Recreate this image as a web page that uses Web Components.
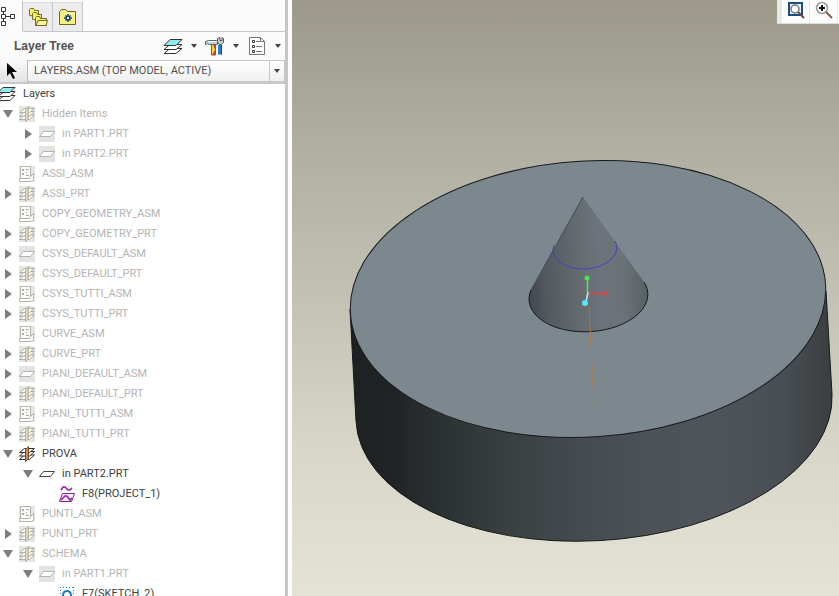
<!DOCTYPE html>
<html lang="en">
<head>
<meta charset="utf-8">
<title>Layer Tree</title>
<style>
html,body{height:100%;margin:0}
body{font:11px/20px Roboto,"Liberation Sans",Arial,sans-serif;color:#404040;background:#fff;overflow:hidden}
</style>
</head>
<body>
<cad-app></cad-app>
<script>
const ICONS = {
  structure: [16, 20, '<path d="M3.500 5v10M3.500 10.500h7" stroke="#333"/><g fill="#fff" stroke="#333"><path d="M1.500 1.500h4v4h-4zM1.500 8.500h4v4h-4zM1.500 15.500h4v4h-4zM10.500 8.500h4v4h-4z"/></g>'],
  folders: [20, 20, '<g fill="#f3ee78" stroke="#716a26"><path d="M1.500 8.500v-6l1-1h3l1 2h4v6z"/><path d="M4.500 12.500v-6l1-1h3l1 2h4v6z"/><path d="M7.500 18.500v-8l1-1h3l1 2h6v7z"/><path d="M8 18.500l2-5h9.500l-1.500 5z" fill="#fbf59a"/></g>'],
  star: [18, 18, '<path d="M.500 16.500v-13l2-2h4l2 2h8v13z" fill="#f6f178" stroke="#6a6428"/><path d="M2 5.500h14" stroke="#fffccb"/><path d="M9 6v8M5 10h8M6.500 7.500l5 5M11.500 7.500l-5 5" stroke="#123a86" stroke-width="1.500"/><path d="M8 9h2v2h-2z" fill="#fff"/>'],
  layers: [20, 17, '<g fill="#fff" stroke="#333" stroke-linejoin="round"><path d="M1 15.500l6-5h12l-6 5z"/><path d="M1 11.500l6-5h12l-6 5z"/><path d="M1 7.500l6-6h12l-6 6z" fill="#8fe9ed"/></g>'],
  root: [16, 16, '<g fill="#fff" stroke="#333" stroke-linejoin="round"><path d="M-2 14.500l6-5h11l-5 5z"/><path d="M-2 10.500l6-5h11l-5 5z"/><path d="M-2 6.500l5-5h12l-5 5z" fill="#8fe9ed"/></g>'],
  tools: [20, 20, '<path d="M6 7h4v11h-4z" fill="#f2dc35"/><path d="M8 8h2v6l-3 5h3v-5z" fill="#db3828"/><path d="M6.500 8v11h4v-11" stroke="#a6502b"/><path d="M13 9h4v9.500h-4z" fill="#2879d2"/><path d="M16.500 9v9.500" stroke="#17488e"/><path d="M12.500 2.500v3l2 3h2l2-2v-4l-1.500-1v3h-2v-3z" fill="#ccc" stroke="#555"/><path d="M.500 8.500v-3l3-1h8l1 1v3h-8l-2-1-1 1z" fill="#b9d5de" stroke="#567"/><path d="M3 5.500h8" stroke="#fff"/>'],
  report: [20, 19, '<g transform="translate(2)"><path d="M.500.500h11l4 4v13h-15z" fill="#fff" stroke="#777"/><path d="M11.500.500v4h4" fill="none" stroke="#777"/><g fill="#fff" stroke="#333"><path d="M3.500 3.500h2v2h-2zM3.500 8.500h2v2h-2zM3.500 13.500h2v2h-2z"/></g><path d="M7 4.500h4M7 9.500h6M7 14.500h6" stroke="#777"/></g>'],
  cursor: [12, 16, '<path d="M1 0v13l3-3 3 6 2-1-3-6h5z" fill="#000"/>'],
  asm: [16, 16, '<path d="M0 0h16v16H0z" fill="#e6e6e3"/><path d="M1.500.500h10v10l3-3v6l-2 2h-12v-3h1z" fill="#fcfcfa" stroke="#b3b3ae"/><path d="M1.500 12.500h9l1-2" stroke="#b3b3ae"/><path d="M3 3h2v2H3zM3 7h2v2H3zM7 6h1v1H7zM7 3h3v1H7zM7 9h3v1H7z" fill="#aaa"/>'],
  prt: [16, 16, '<path d="M0 0h16v16H0z" fill="#e5e5e2"/><g fill="#fafaf7" stroke="#b0b0a6"><path d="M.500 13.500l5-4.500h10l-5 4.500z"/><path d="M.500 10l5-4.500h10l-5 4.500z"/><path d="M.500 6.500l5-4h10l-5 4z"/></g><path d="M6.500 3.500l3-3v12l-3 3z" fill="#d8d3bf" stroke="#bdb69c"/>'],
  stack: [16, 16, '<g fill="#fff" stroke="#333"><path d="M.500 13.500l5-4.500h10l-5 4.500z"/><path d="M.500 10l5-4.500h10l-5 4.500z"/><path d="M.500 6.500l5-4h10l-5 4z"/></g><path d="M6.500 3.500l3-3v12l-3 3z" fill="#c98d55" stroke="#7a4a22"/>'],
  sheetoff: [16, 16, '<path d="M0 0h16v16H0z" fill="#e3e3e1"/><path d="M.500 10.500l4-5h11l-4 5z" fill="#fff" stroke="#b5b5b0"/>'],
  sheet: [16, 16, '<path d="M.500 10.500l4-5h11l-4 5z" fill="#fff" stroke="#444"/>'],
  project: [16, 16, '<path d="M2 4l2-3h2l3 3h2l2-2" stroke="#8b1c9b" stroke-width="1.500"/><path d="M.500 15.500l3-8h12l-3 8z" fill="#fbefff" stroke="#8b1c9b"/><path d="M2 14l4-4h2l3 4 2-2" stroke="#8b1c9b" stroke-width="1.500"/>'],
  sketch: [16, 16, '<path d="M1 1.500h14M1 14.500h14M1.500 1v14M14.500 1v14" stroke="#188ad0" stroke-dasharray="1 2"/><path d="M2 13c2 0 2-1 2-3 0-3 1-5 4-5s4 2 4 5c0 2 0 3 2 3" fill="#fff" stroke="#1478bd" stroke-width="2"/>'],
  refit: [18, 18, '<path d="M2 2h13v12H2z" fill="#eef4f8" stroke="#174f84" stroke-width="2"/><circle cx="8" cy="8" r="4" fill="#fff" stroke="#777" stroke-width="1.500"/><path d="M11 11l6 6" stroke="#704739" stroke-width="2"/>'],
  zoomin: [18, 18, '<circle cx="7" cy="7" r="5.500" fill="#fff" stroke="#999" stroke-width="1.500"/><path d="M7 4v6M4 7h6" stroke="#111" stroke-width="2"/><path d="M11 11l6 6" stroke="#8a5940" stroke-width="2"/>'],
  down: [6, 4, '<path d="M0 0h6L3 4z" fill="#444"/>'],
  open: [10, 10, '<path d="M0 1h10L5 9z" fill="#7d7d7d"/>'],
  closed: [10, 10, '<path d="M2 0v10l7-5z" fill="#7d7d7d"/>']
};

function define(name, html) {
  customElements.define(name, class extends HTMLElement {
    constructor() {
      super();
      this.attachShadow({mode: 'open'}).innerHTML = html;
    }
  });
}

customElements.define('cad-icon', class extends HTMLElement {
  connectedCallback() {
    const [w, h, body] = ICONS[this.getAttribute('name')];
    const root = this.shadowRoot || this.attachShadow({mode: 'open'});
    root.innerHTML = `<style>:host{display:block;flex:none}svg{display:block}</style><svg width="${w}" height="${h}" viewBox="0 0 ${w} ${h}" fill="none" aria-hidden="true">${body}</svg>`;
  }
});

define('panel-tabs', `<style>
:host{display:flex;height:32px;box-sizing:border-box;background:#fbfbfb}
button{border:1px solid #c5c7cb;border-left:0;border-top-color:#d8d8d8;background:#ececee;width:30px;padding:0;margin:2px 0 0;display:flex;align-items:center;justify-content:center}
button[aria-selected=true]{width:23px;margin:0;border-color:transparent #c5c7cb transparent transparent;background:#fcfcfc;justify-content:flex-start}
i{flex:1;border-bottom:1px solid #c5c7cb}
div{display:contents}
</style><div role="tablist"><button role="tab" aria-selected="true" aria-label="Model tree"><cad-icon name="structure"></cad-icon></button><button role="tab" aria-label="Folder browser"><cad-icon name="folders"></cad-icon></button><button role="tab" aria-label="Favorites"><cad-icon name="star"></cad-icon></button></div><i></i>`);

define('menu-button', `<style>
:host{display:block}
button{border:0;background:none;padding:0;display:flex;align-items:center;gap:8px;height:24px}
</style><button aria-haspopup="menu"><slot></slot><cad-icon name="down"></cad-icon></button>`);

define('panel-header', `<style>
:host{display:flex;align-items:center;height:28px;background:#fbfbfb;padding:0 4px 0 14px}
h1{font:bold 12px/20px "Liberation Sans",Arial,sans-serif;margin:0;flex:1;color:#505050}
div{display:flex;gap:8px}
</style><h1>Layer Tree</h1><div><menu-button title="Show"><cad-icon name="layers"></cad-icon></menu-button><menu-button title="Layer"><cad-icon name="tools"></cad-icon></menu-button><menu-button title="Settings"><cad-icon name="report"></cad-icon></menu-button></div>`);

define('model-picker', `<style>
:host{display:flex;height:24px;box-sizing:border-box;border-bottom:2px solid #c8c8cb;background:#f2f2f3}
button{width:28px;border:0;border-right:1px solid #b9b9bc;background:linear-gradient(#fafafa,#e2e2e3);padding:0 0 0 6px;display:flex;align-items:center}
div{flex:1;display:grid;border:1px solid #c5c5c8;border-left:0;box-sizing:border-box;background:linear-gradient(#fff,#f0f0f1)}
select,span{grid-area:1/1}
select{appearance:none;border:0;background:none;font:inherit;color:#505050;padding:0 18px 0 6px;width:100%}
span{justify-self:end;width:14px;border-left:1px solid #c5c5c8;display:flex;align-items:center;justify-content:center;pointer-events:none}
</style><button aria-label="Select"><cad-icon name="cursor"></cad-icon></button><div><select aria-label="Active model"><option>LAYERS.ASM (TOP MODEL, ACTIVE)</option></select><span><cad-icon name="down"></cad-icon></span></div>`);

customElements.define('layer-row', class extends HTMLElement {
  connectedCallback() {
    const level = +this.getAttribute('level');
    const state = this.getAttribute('state');
    const root = this.shadowRoot || this.attachShadow({mode: 'open'});
    const twisty = state ? `<button aria-label="${state === 'open' ? 'Collapse' : 'Expand'}"><cad-icon name="${state}"></cad-icon></button>` : '<i></i>';
    root.innerHTML = `<style>
:host{display:flex;align-items:center;height:20px;padding-left:${level ? level * 20 - 17 : 0}px;white-space:nowrap;color:#404040}
:host([dim]){color:#b4b4b4}
button,i{width:16px;height:16px;border:0;background:none;padding:0;display:flex;align-items:center;flex:none}
span{padding-left:7px}
</style>${level ? twisty : ''}<cad-icon name="${this.getAttribute('icon')}"></cad-icon><span><slot></slot></span>`;
    this.setAttribute('role', 'treeitem');
    this.setAttribute('aria-level', level + 1);
    if (state) this.setAttribute('aria-expanded', state === 'open');
  }
});

const ROWS = [
  [0, '', 'root', 'Layers', 1],
  [1, 'open', 'prt', 'Hidden Items'],
  [2, 'closed', 'sheetoff', 'in PART1.PRT'],
  [2, 'closed', 'sheetoff', 'in PART2.PRT'],
  [1, '', 'asm', 'ASSI_ASM'],
  [1, 'closed', 'prt', 'ASSI_PRT'],
  [1, '', 'asm', 'COPY_GEOMETRY_ASM'],
  [1, 'closed', 'prt', 'COPY_GEOMETRY_PRT'],
  [1, 'closed', 'sheetoff', 'CSYS_DEFAULT_ASM'],
  [1, 'closed', 'prt', 'CSYS_DEFAULT_PRT'],
  [1, 'closed', 'asm', 'CSYS_TUTTI_ASM'],
  [1, 'closed', 'prt', 'CSYS_TUTTI_PRT'],
  [1, '', 'asm', 'CURVE_ASM'],
  [1, 'closed', 'prt', 'CURVE_PRT'],
  [1, 'closed', 'sheetoff', 'PIANI_DEFAULT_ASM'],
  [1, 'closed', 'prt', 'PIANI_DEFAULT_PRT'],
  [1, 'closed', 'asm', 'PIANI_TUTTI_ASM'],
  [1, 'closed', 'prt', 'PIANI_TUTTI_PRT'],
  [1, 'open', 'stack', 'PROVA', 1],
  [2, 'open', 'sheet', 'in PART2.PRT', 1],
  [3, '', 'project', 'F8(PROJECT_1)', 1],
  [1, '', 'asm', 'PUNTI_ASM'],
  [1, 'closed', 'prt', 'PUNTI_PRT'],
  [1, 'open', 'prt', 'SCHEMA'],
  [2, 'open', 'sheetoff', 'in PART1.PRT'],
  [3, '', 'sketch', 'F7(SKETCH_2)', 1]
];

define('layer-tree', `<style>:host{display:block;flex:1;min-height:0;overflow:hidden;background:#fff}</style><div role="tree" aria-label="Layers">${ROWS.map(([level, state, icon, text, lit]) =>
  `<layer-row level="${level}" state="${state}" icon="${icon}"${lit ? '' : ' dim'}>${text}</layer-row>`).join('')}</div>`);

define('layer-panel', `<style>
:host{display:flex;flex-direction:column;min-height:0;border-right:3px solid #c6c6c8;margin-right:4px}
</style><panel-tabs></panel-tabs><panel-header></panel-header><model-picker></model-picker><layer-tree></layer-tree>`);

define('view-toolbar', `<style>
:host{display:flex;position:absolute;top:0;right:0;height:24px;box-sizing:border-box;padding-left:5px;background:#e8e8e8;border-bottom:1px solid #dcdcdc;gap:1px}
button{width:27px;border:0;background:#fcfcfc;padding:0 0 3px;display:flex;align-items:center;justify-content:center}
i{width:1px;background:#fcfcfc}
</style><button aria-label="Refit"><cad-icon name="refit"></cad-icon></button><button aria-label="Zoom in"><cad-icon name="zoomin"></cad-icon></button><i></i>`);

define('model-view', `<style>
:host{display:block;position:relative;min-width:0;min-height:0;overflow:hidden;background:linear-gradient(#9c998b 0%,#b1afa1 25%,#c5c3b6 52%,#d7d6c9 75%,#e4e3d6 100%)}
svg{display:block;width:100%;height:100%}
</style><svg viewBox="292 0 547 596" preserveAspectRatio="xMidYMid meet" role="img" aria-label="Disc with a cone">
<defs>
<linearGradient id="side" gradientUnits="userSpaceOnUse" x1="350" y1="0" x2="832" y2="0">
<stop offset="0" stop-color="#1e2122"/><stop offset=".09" stop-color="#212425"/><stop offset=".2" stop-color="#2d3233"/><stop offset=".34" stop-color="#3b4041"/><stop offset=".46" stop-color="#43494e"/><stop offset=".6" stop-color="#4c5155"/><stop offset=".76" stop-color="#4e545a"/><stop offset=".9" stop-color="#484e53"/><stop offset="1" stop-color="#3b3e40"/></linearGradient>
<linearGradient id="cone" gradientUnits="userSpaceOnUse" x1="530" y1="290" x2="646" y2="284">
<stop offset="0" stop-color="#43494d"/><stop offset=".15" stop-color="#545b60"/><stop offset=".35" stop-color="#60676c"/><stop offset=".6" stop-color="#6c737a"/><stop offset=".8" stop-color="#6b7278"/><stop offset="1" stop-color="#596166"/></linearGradient>
</defs>
<path d="M350 309L356 421A238 133 -3.500 0 0 832 394L826 291" fill="url(#side)" stroke="#161a1c"/>
<ellipse cx="588" cy="299" rx="238" ry="138" transform="rotate(-3.500 588 299)" fill="#7d878e" stroke="#161a1c"/>
<path d="M583 197L531 290A59.500 35 -3.500 1 0 644 282Z" fill="url(#cone)"/>
<path d="M531 290A59.500 35 -3.500 1 0 644 282" stroke="#161a1c" fill="none"/>
<path d="M583 197L531 290" stroke="#454b50"/>
<path d="M554 245A32 20 -3.500 1 0 615 241" fill="none" stroke="#4540c4"/>
<path d="M589 306L594 406" stroke="#b07a38" stroke-dasharray="8 2"/>
<path d="M588 292L586 302" stroke="#b9eef4" stroke-width="1.500"/>
<path d="M587.500 279V292" stroke="#62de67" stroke-width="1.500"/>
<circle cx="587" cy="278" r="2.500" fill="#48e34d"/>
<path d="M589 293.500H604" stroke="#dc4546" stroke-width="1.500"/><path d="M603 290.500l6 3-6 3z" fill="#e04344"/>
<circle cx="585" cy="303" r="3" fill="#4ee8f6"/>
</svg><view-toolbar></view-toolbar>`);

define('cad-app', `<style>
:host{display:grid;grid-template-columns:292px minmax(0,1fr);grid-template-rows:minmax(0,1fr);height:100vh}
</style><layer-panel></layer-panel><model-view></model-view>`);
</script>
</body>
</html>
